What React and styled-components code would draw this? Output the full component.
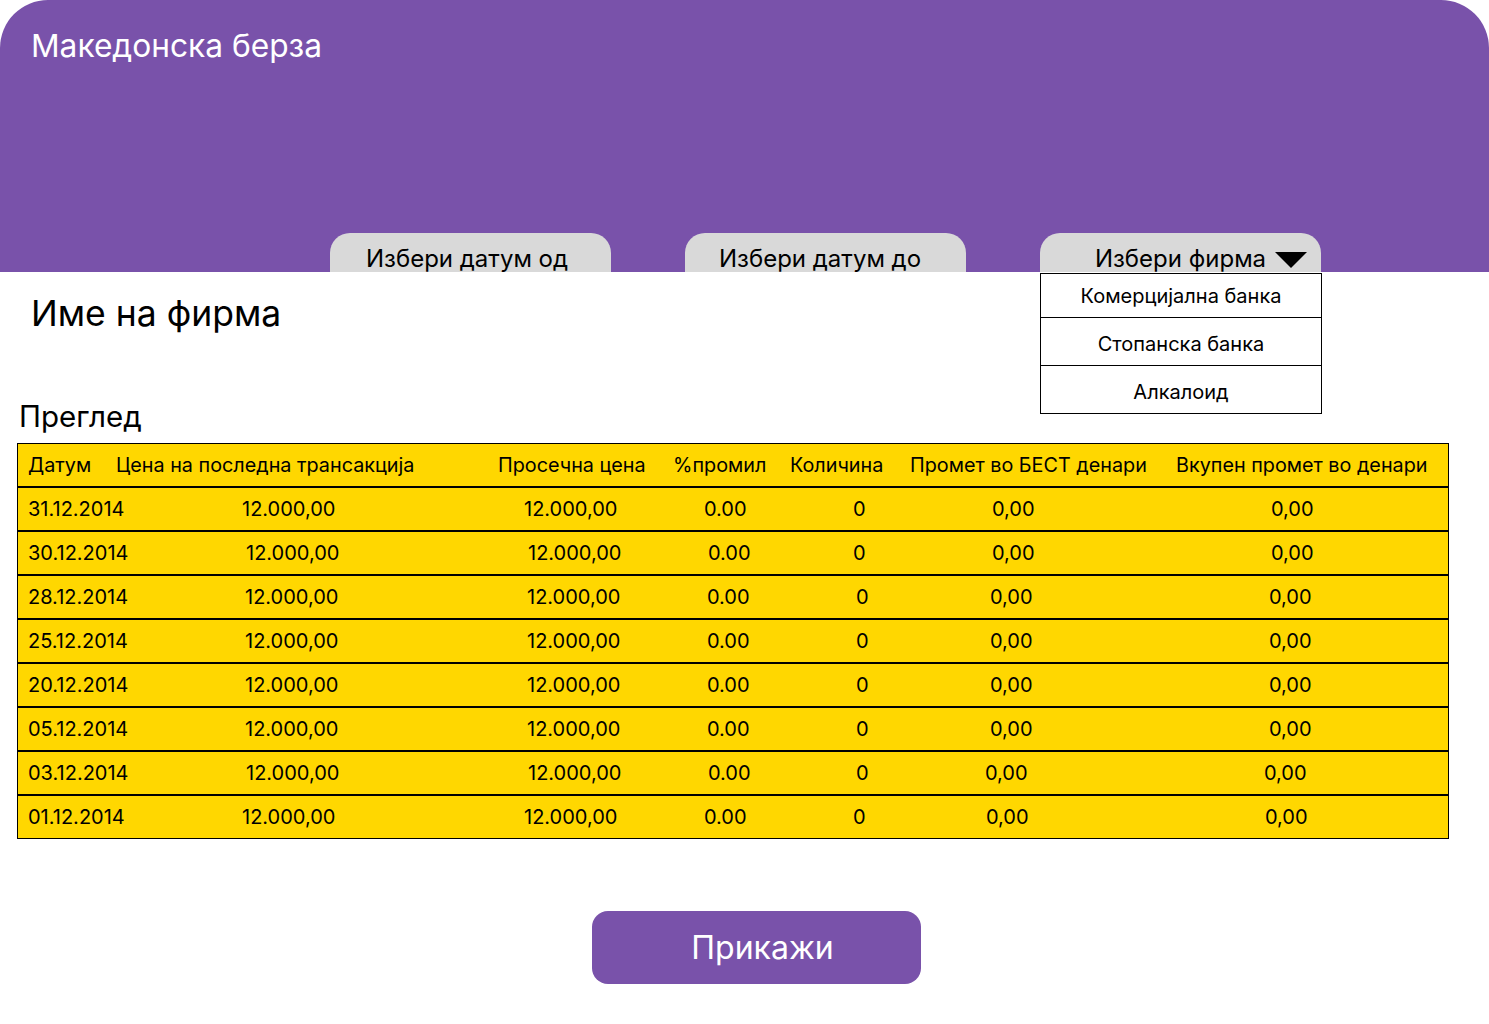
import React from "react";
import styled, { createGlobalStyle } from "styled-components";

const Global = createGlobalStyle`
  html, body { margin: 0; padding: 0; background: #fff; }
  body { font-family: Inter, "Noto Sans", sans-serif; color: #000; }
`;

const PURPLE = "#7952AA";

const Page = styled.div`
  width: 1489px;
  min-height: 1024px;
  background: #fff;
`;

const Header = styled.header`
  height: 272px;
  background: ${PURPLE};
  border-radius: 48px 48px 0 0;
  display: flex;
  flex-direction: column;
  justify-content: space-between;
`;

const Brand = styled.h1`
  margin: 0;
  padding: 27px 0 0 31px;
  font-size: 31.7px;
  line-height: 38px;
  font-weight: 400;
  color: #fff;
`;

const Tabs = styled.nav`
  display: flex;
  gap: 74px;
  padding-left: 330px;
  height: 39px;
`;

const TabWrap = styled.div`
  position: relative;
  width: 281px;
`;

const Tab = styled.div`
  height: 39px;
  box-sizing: border-box;
  background: #d9d9d9;
  border-radius: 20px 20px 0 0;
  padding: 13px 0 0 ${(p) => (p.$inset ? `${p.$inset}px` : "0")};
  overflow: hidden;
  display: grid;
  grid-template-columns: ${(p) => (p.$inset ? "auto" : "1fr auto 1fr")};
  align-items: start;
  font-size: 24px;
  line-height: 26px;
  color: #000;
`;

const TabLabel = styled.span`
  grid-column: ${(p) => (p.$centered ? 2 : 1)};
  white-space: nowrap;
`;

const Caret = styled.svg`
  grid-column: 3;
  margin: 6px 0 0 9px;
`;

const Dropdown = styled.ul`
  position: absolute;
  top: 40px;
  left: 0;
  width: 282px;
  box-sizing: border-box;
  margin: 0;
  padding: 0;
  list-style: none;
  background: #fff;
  border: 1px solid #000;
  z-index: 2;
`;

const Option = styled.li`
  height: 43px;
  display: flex;
  align-items: center;
  justify-content: center;
  font-size: 20px;
  & + & {
    height: 48px;
    box-sizing: border-box;
    padding-top: 4px;
    border-top: 1px solid #000;
  }
`;

const Main = styled.main`
  padding: 0 0 40px 0;
`;

const FirmName = styled.h2`
  margin: 20px 0 0 31px;
  font-size: 35.5px;
  line-height: 44px;
  font-weight: 400;
`;

const SectionTitle = styled.h3`
  margin: 62px 0 9px 19px;
  font-size: 29.5px;
  line-height: 36px;
  font-weight: 400;
`;

const Table = styled.div`
  margin-left: 17px;
  width: 1432px;
  box-sizing: border-box;
  background: #ffd700;
  border: 1px solid #000;
`;

const HeadRow = styled.div`
  display: grid;
  grid-template-columns: 88px 382px 175px 117px 120px 266px 1fr;
  align-items: center;
  height: 42px;
  padding-left: 10px;
  border-bottom: 2px solid #000;
  font-size: 19.8px;
  white-space: nowrap;
`;

const Row = styled.div`
  display: grid;
  grid-template-columns: 214px 282px 180px 149px 139px 279px 1fr;
  align-items: center;
  height: 42px;
  padding-left: 10px;
  font-size: 20px;
  white-space: nowrap;
  & + & { border-top: 2px solid #000; }
`;

const Cell = styled.span`
  position: relative;
  left: ${(p) => p.$dx || 0}px;
`;

const Actions = styled.div`
  padding-left: 592px;
  margin-top: 72px;
`;

const ShowButton = styled.button`
  width: 329px;
  height: 73px;
  border: none;
  border-radius: 16px;
  padding: 0 0 0 12px;
  background: ${PURPLE};
  color: #fff;
  font-family: Inter, "Noto Sans", sans-serif;
  font-size: 32px;
  cursor: pointer;
`;

const rows = [
  { d: "31.12.2014", dx: [0, 0, 0, 0, 0, 0] },
  { d: "30.12.2014", dx: [4, 4, 4, 0, 0, 0] },
  { d: "28.12.2014", dx: [3, 3, 3, 3, -2, -2] },
  { d: "25.12.2014", dx: [3, 3, 3, 3, -2, -2] },
  { d: "20.12.2014", dx: [3, 3, 3, 3, -2, -2] },
  { d: "05.12.2014", dx: [3, 3, 3, 3, -2, -2] },
  { d: "03.12.2014", dx: [4, 4, 4, 3, -7, -7] },
  { d: "01.12.2014", dx: [0, 0, 0, 0, -6, -6] },
];

const headers = [
  "Датум",
  "Цена на последна трансакција",
  "Просечна цена",
  "%промил",
  "Количина",
  "Промет во БЕСТ денари",
  "Вкупен промет во денари",
];

export default function App() {
  const values = ["12.000,00", "12.000,00", "0.00", "0", "0,00", "0,00"];
  return (
    <Page>
      <Global />
      <Header>
        <Brand>Македонска берза</Brand>
        <Tabs>
          <TabWrap>
            <Tab $inset={36}><TabLabel>Избери датум од</TabLabel></Tab>
          </TabWrap>
          <TabWrap>
            <Tab $inset={34}><TabLabel>Избери датум до</TabLabel></Tab>
          </TabWrap>
          <TabWrap>
            <Tab>
              <TabLabel $centered>Избери фирма</TabLabel>
              <Caret width="32" height="16" viewBox="0 0 32 16">
                <polygon points="0,0 32,0 16,16" fill="#000" />
              </Caret>
            </Tab>
            <Dropdown>
              <Option>Комерцијална банка</Option>
              <Option>Стопанска банка</Option>
              <Option>Алкалоид</Option>
            </Dropdown>
          </TabWrap>
        </Tabs>
      </Header>
      <Main>
        <FirmName>Име на фирма</FirmName>
        <SectionTitle>Преглед</SectionTitle>
        <Table>
          <HeadRow>
            {headers.map((h) => (
              <span key={h}>{h}</span>
            ))}
          </HeadRow>
          {rows.map((r) => (
            <Row key={r.d}>
              <Cell>{r.d}</Cell>
              {values.map((v, i) => (
                <Cell key={i} $dx={r.dx[i]}>{v}</Cell>
              ))}
            </Row>
          ))}
        </Table>
        <Actions>
          <ShowButton>Прикажи</ShowButton>
        </Actions>
      </Main>
    </Page>
  );
}
